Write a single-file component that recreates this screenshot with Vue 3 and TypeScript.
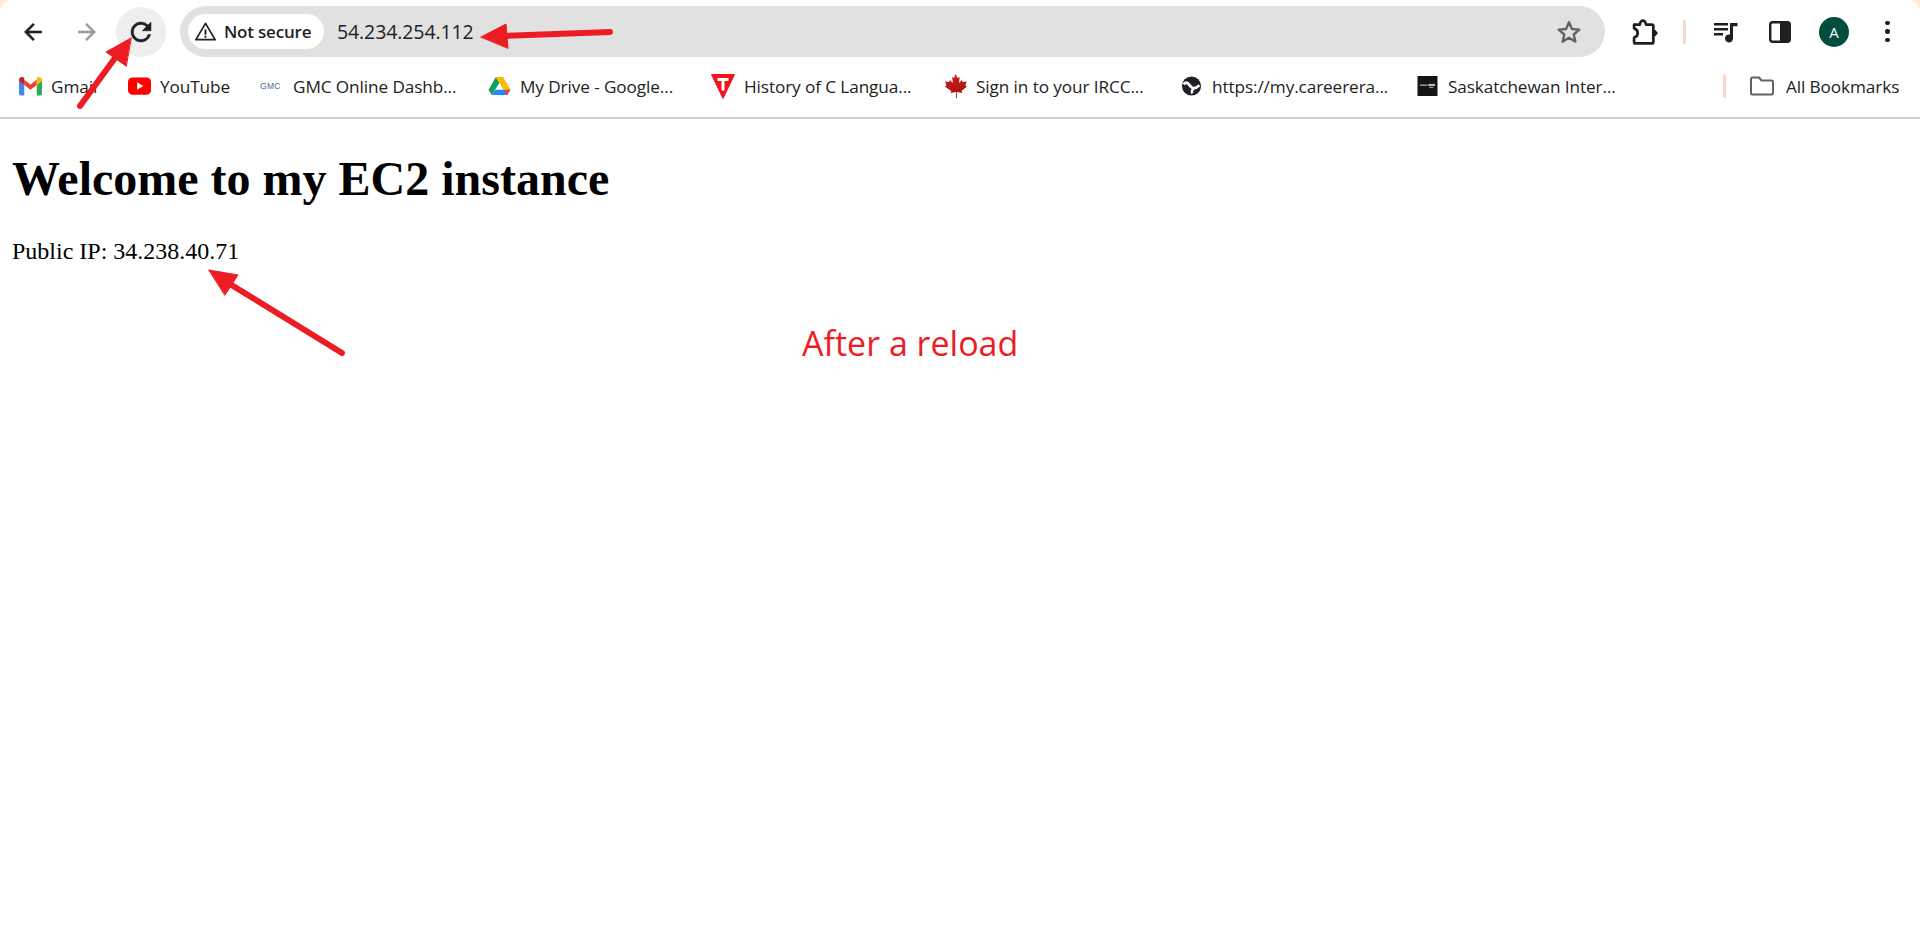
<script setup lang="ts">
interface Bookmark { label: string; icon: string; width: number }
const bookmarks: Bookmark[] = [
  { label: 'Gmail', icon: 'gmail', width: 109 },
  { label: 'YouTube', icon: 'youtube', width: 132 },
  { label: 'GMC Online Dashb...', icon: 'gmc', width: 228 },
  { label: 'My Drive - Google...', icon: 'drive', width: 223 },
  { label: 'History of C Langua...', icon: 't', width: 233 },
  { label: 'Sign in to your IRCC...', icon: 'maple', width: 236 },
  { label: 'https://my.careerera...', icon: 'globe', width: 236 },
  { label: 'Saskatchewan Inter...', icon: 'sask', width: 200 }
]
</script>

<template>
  <div class="page">
    <div class="chrome">
      <div class="toolbar">
        <div class="nav">
          <button class="nav-btn">
            <svg viewBox="0 0 24 24" class="ic24"><path fill="#1f1f1f" stroke="#1f1f1f" stroke-width=".5" d="M20 11H7.83l5.59-5.59L12 4l-8 8 8 8 1.41-1.41L7.83 13H20v-2z"/></svg>
          </button>
          <button class="nav-btn">
            <svg viewBox="0 0 24 24" class="ic24"><path fill="#9a9a9a" stroke="#9a9a9a" stroke-width=".5" d="M4 11h12.17l-5.59-5.59L12 4l8 8-8 8-1.41-1.41L16.17 13H4v-2z"/></svg>
          </button>
          <button class="nav-btn reload">
            <svg viewBox="0 0 24 24" class="ic26"><path fill="#1f1f1f" stroke="#1f1f1f" stroke-width=".4" d="M17.65 6.35A7.958 7.958 0 0 0 12 4c-4.42 0-7.99 3.58-7.99 8s3.57 8 7.99 8c3.73 0 6.84-2.55 7.73-6h-2.08A5.99 5.99 0 0 1 12 18c-3.31 0-6-2.69-6-6s2.69-6 6-6c1.66 0 3.14.69 4.22 1.78L13 11h7V4l-2.35 2.35z"/></svg>
          </button>
        </div>
        <div class="omnibox">
          <div class="chip">
            <svg viewBox="0 0 24 24" class="warn"><path fill="none" stroke="#1f1f1f" stroke-width="1.8" stroke-linejoin="round" d="M12 3.5 22 20.5H2z"/><path fill="#1f1f1f" d="M11 10h2v5.5h-2zM11 16.5h2v2h-2z"/></svg>
            <span class="chip-text">Not secure</span>
          </div>
          <span class="url">54.234.254.112</span>
          <svg viewBox="0 0 24 24" class="star"><path fill="none" stroke="#5f6368" stroke-width="2.2" stroke-linejoin="round" d="m12 3 2.7 6.2 6.8.6-5.1 4.5 1.5 6.6L12 17.4l-5.900 3.500 1.500-6.600-5.100-4.500 6.800-.6z"/></svg>
        </div>
        <div class="actions">
          <svg viewBox="0 0 25 25" class="puzzle"><path fill="none" stroke="#1f1f1f" stroke-width="2.600" stroke-linejoin="round" d="M2 5.500h5.500c.3-1 .4-4 3-4s2.700 3 3 4H19a1.500 1.500 0 0 1 1.500 1.500v15a1.500 1.500 0 0 1-1.500 1.500H3.500A1.500 1.500 0 0 1 2 22v-4c1.500-.5 3.500-1.500 3.500-4.500S3.500 9.500 2 9z"/><path fill="#1f1f1f" d="M20 10.500h2.500l2.500 3-2.500 3H20z"/></svg>
          <span class="sep"></span>
          <svg viewBox="0 0 24 24" class="music"><path fill="#1f1f1f" d="M0 3h14v2.400H0zM0 8h14v2.400H0zM0 13h9v2.400H0zM16 3h7.500v3.200H19v12.300a4 4 0 1 1-3-3.900z"/></svg>
          <svg viewBox="0 0 22 22" class="panel"><rect x="1.200" y="1.200" width="19.600" height="19.600" rx="2.500" fill="#fff" stroke="#1f1f1f" stroke-width="2.400"/><rect x="11" y="1" width="10" height="20" rx="2" fill="#1f1f1f"/></svg>
          <div class="avatar">A</div>
          <div class="dots"><i></i><i></i><i></i></div>
        </div>
      </div>

      <div class="bookmarks">
        <div class="bm-list">
          <div v-for="b in bookmarks" :key="b.label" class="bm" :style="{ width: b.width + 'px' }">
            <svg v-if="b.icon === 'gmail'" viewBox="0 0 22 18" class="bi"><path fill="#4285f4" d="M0 3v13.500A1.500 1.500 0 0 0 1.500 18H5V8z"/><path fill="#34a853" d="M22 3v13.500a1.500 1.500 0 0 1-1.500 1.500H17V8z"/><path fill="#ea4335" d="M5 8v-5l6 4.500 6-4.500v5l-6 4.500z"/><path fill="#c5221f" d="M0 3c0-2.500 3-3.500 5-2v7L0 4.200z"/><path fill="#fbbc04" d="M22 3c0-2.500-3-3.500-5-2v7l5-3.800z"/></svg>
            <svg v-else-if="b.icon === 'youtube'" viewBox="0 0 24 18" class="bi"><rect width="24" height="18" rx="4.500" fill="#f00"/><path fill="#fff" d="M9.500 5l6.500 4-6.500 4z"/></svg>
            <span v-else-if="b.icon === 'gmc'" class="gmc">GMC</span>
            <svg v-else-if="b.icon === 'drive'" viewBox="0 0 24 22" class="bi"><path fill="#0f9d58" d="M8 1 12 7.500 3.500 21 0 15z"/><path fill="#ffba00" d="M8 1h8l8 14h-7.500z"/><path fill="#2684fc" d="M7.500 15H24l-3.500 6h-17z"/><path fill="#ea4335" d="M18 15h6l-3.500 6h-1.500z"/></svg>
            <svg v-else-if="b.icon === 't'" viewBox="0 0 24 25" class="bi tri"><path fill="#f4121d" stroke="#f4121d" stroke-linejoin="round" d="M.5.5h23L12 24.500z"/><path fill="#fff" d="M6.500 4h11v3h-4v9.500h-3V7h-4z"/></svg>
            <svg v-else-if="b.icon === 'maple'" viewBox="1 0 22 24" class="bi leaf"><defs><linearGradient id="leafg" x1="0" y1="0" x2="0" y2="1"><stop offset="0" stop-color="#c9201b"/><stop offset="1" stop-color="#a30f0c"/></linearGradient></defs><path fill="url(#leafg)" d="M12 0l2.200 4 2-1-.8 6 3-3 .8 2 4-.6-1.300 4 1.600 1-5.500 4.500.7 2-5.500-.8.200 5.900h-1l.2-5.900-5.500.8.700-2L1.300 12.400l1.600-1-1.300-4 4 .6.800-2 3 3-.8-6 2 1z"/></svg>
            <svg v-else-if="b.icon === 'globe'" viewBox="0 0 24 24" class="bi"><circle cx="12" cy="12" r="11.500" fill="#202124"/><path fill="none" stroke="#fff" stroke-width="3.400" d="M2.500 10C6 6 8.500 9 10 11.500S15 17 21.500 11"/><path fill="none" stroke="#fff" stroke-width="3" d="M13 21c-1.500-2.500 0-5 2-5.500"/></svg>
            <svg v-else viewBox="0 0 24 24" class="bi"><rect width="24" height="24" fill="#141414"/><rect x="3" y="10" width="9" height="2" fill="#8a8a8a"/><rect x="13" y="9.500" width="8" height="2.500" fill="#bbb"/><rect x="14" y="13" width="5" height="1.500" fill="#999"/></svg>
            <span class="bm-label">{{ b.label }}</span>
          </div>
        </div>
        <span class="sep sep-bm"></span>
        <div class="all">
          <svg viewBox="0 0 24 20" class="folder"><path fill="none" stroke="#5f6368" stroke-width="2" stroke-linejoin="round" d="M1 3a1.500 1.500 0 0 1 1.500-1.500H9l2.500 3h10A1.500 1.500 0 0 1 23 6v11a1.500 1.500 0 0 1-1.500 1.500h-19A1.500 1.500 0 0 1 1 17z"/></svg>
          <span class="bm-label">All Bookmarks</span>
        </div>
      </div>
    </div>

    <main class="content">
      <h1 class="title">Welcome to my EC2 instance</h1>
      <p class="ip">Public IP: 34.238.40.71</p>
    </main>

    <svg class="arrows" viewBox="0 0 1920 945">
      <g fill="#ed1c24" stroke="#ed1c24" stroke-linecap="round" stroke-linejoin="round">
        <path fill="none" stroke-width="6" d="M80 106 115 58"/>
        <path stroke-width="1" d="M131 38 106 52 126 66z"/>
        <path fill="none" stroke-width="6" d="M610 32 500 36"/>
        <path stroke-width="1" d="M481 37 506 24 508 48z"/>
        <path fill="none" stroke-width="6" d="M342 353 225 281"/>
        <path stroke-width="1" d="M209 270 238 275 225 295z"/>
      </g>
    </svg>
    <div class="note">After a reload</div>
  </div>
</template>

<style scoped>
.page { position: relative; width: 1920px; height: 945px; background: #fde8dc; overflow: hidden; display: flex; flex-direction: column; }
.chrome { height: 119px; flex: none; box-sizing: border-box; border-bottom: 2px solid #cdcdcd; border-radius: 12px 12px 0 0; background: #fff; font-family: "Open Sans", "Noto Sans", sans-serif; color: #1f1f1f; }
.toolbar { height: 63px; display: flex; align-items: center; }
.nav { display: flex; align-items: center; width: 180px; padding-left: 8px; box-sizing: border-box; }
.nav-btn { width: 50px; height: 50px; margin-right: 4px; padding: 0; border: 0; border-radius: 50%; background: transparent; display: flex; align-items: center; justify-content: center; }
.nav-btn.reload { background: #eeeeee; }
.ic24 { width: 26px; height: 26px; }
.ic26 { width: 30px; height: 30px; }
.omnibox { width: 1425px; height: 51px; border-radius: 26px; background: #e1e1e1; display: flex; align-items: center; padding: 0 23px 0 8px; box-sizing: border-box; }
.chip { width: 136px; height: 35px; box-sizing: border-box; border-radius: 18px; background: #fff; display: flex; align-items: center; padding-left: 6px; gap: 7px; }
.warn { width: 23px; height: 23px; }
.chip-text { font-size: 17px; font-weight: 600; letter-spacing: -0.2px; white-space: nowrap; }
.url { margin-left: 13px; font-size: 19.500px; letter-spacing: -0.1px; color: #222; }
.star { margin-left: auto; width: 26px; height: 26px; }
.actions { flex: 1; display: flex; align-items: center; padding-left: 27px; height: 51px; }
.puzzle { width: 26px; height: 26px; }
.sep { display: block; width: 3px; height: 24px; border-radius: 2px; background: #fbd6c3; }
.actions .sep { margin-left: 25px; }
.music { width: 24px; height: 24px; margin-left: 28px; }
.panel { width: 22px; height: 22px; margin-left: 31px; }
.avatar { width: 30px; height: 30px; margin-left: 28px; border-radius: 50%; background: #004d40; color: #fff; font-size: 15px; display: flex; align-items: center; justify-content: center; }
.dots { margin-left: 36px; display: flex; flex-direction: column; gap: 4px; }
.dots i { display: block; width: 4.500px; height: 4.500px; border-radius: 50%; background: #1f1f1f; }
.bookmarks { height: 54px; padding-bottom: 8px; box-sizing: border-box; display: flex; align-items: center; padding-left: 19px; }
.bm-list { display: flex; align-items: center; width: 1703px; }
.bm { display: flex; align-items: center; gap: 9px; white-space: nowrap; flex: none; }
.bi { width: 23px; height: 20px; flex: none; }
.tri { height: 25px; width: 24px; }
.leaf { height: 24px; }
.gmc { width: 24px; flex: none; font-family: "Liberation Sans", sans-serif; font-size: 8.500px; color: #4a6a9a; letter-spacing: .3px; }
.bm-label { font-size: 17.200px; letter-spacing: -0.1px; color: #222; }
.sep-bm { flex: none; margin-left: 1px; }
.all { display: flex; align-items: center; gap: 12px; margin-left: 24px; }
.folder { width: 24px; height: 20px; flex: none; }
.content { flex: 1; background: #fff; padding: 0 12px; color: #000; font-family: "Liberation Serif", "Times New Roman", serif; }
.title { margin: 32px 0; font-size: 48px; line-height: 55px; font-weight: 700; }
.ip { margin: 0; font-size: 24px; line-height: 27px; }
.arrows { position: absolute; left: 0; top: 0; width: 1920px; height: 945px; pointer-events: none; }
.note { position: absolute; left: 802px; top: 319px; font-family: "Open Sans", "Noto Sans", sans-serif; font-size: 34px; line-height: 48px; color: #ed1c24; white-space: nowrap; }
</style>
